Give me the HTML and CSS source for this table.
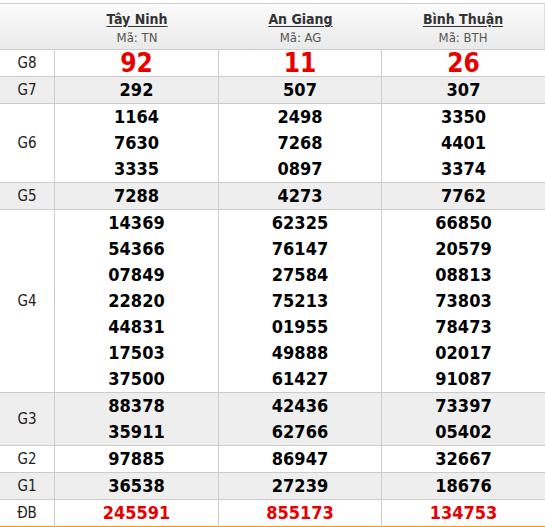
FILE: index.html
```html
<!DOCTYPE html>
<html lang="vi">
<head>
<meta charset="utf-8">
<title>Kết quả xổ số</title>
<link rel="stylesheet" href="styles.css">
</head>
<body>
<table class="kq">
  <colgroup>
    <col class="c-label">
    <col class="c-a">
    <col class="c-b">
    <col class="c-c">
  </colgroup>
  <thead>
    <tr>
      <th class="h-empty"></th>
      <th><a class="prov" href="#">Tây Ninh</a><div class="code">Mã: TN</div></th>
      <th><a class="prov" href="#">An Giang</a><div class="code">Mã: AG</div></th>
      <th class="h-last"><a class="prov" href="#">Bình Thuận</a><div class="code">Mã: BTH</div></th>
    </tr>
  </thead>
  <tbody>
    <tr class="g8">
      <td class="lbl">G8</td>
      <td><div class="n big">92</div></td>
      <td><div class="n big">11</div></td>
      <td><div class="n big">26</div></td>
    </tr>
    <tr class="alt">
      <td class="lbl">G7</td>
      <td><div class="n">292</div></td>
      <td><div class="n">507</div></td>
      <td><div class="n">307</div></td>
    </tr>
    <tr>
      <td class="lbl">G6</td>
      <td><div class="n">1164</div><div class="n">7630</div><div class="n">3335</div></td>
      <td><div class="n">2498</div><div class="n">7268</div><div class="n">0897</div></td>
      <td><div class="n">3350</div><div class="n">4401</div><div class="n">3374</div></td>
    </tr>
    <tr class="alt">
      <td class="lbl">G5</td>
      <td><div class="n">7288</div></td>
      <td><div class="n">4273</div></td>
      <td><div class="n">7762</div></td>
    </tr>
    <tr>
      <td class="lbl">G4</td>
      <td><div class="n">14369</div><div class="n">54366</div><div class="n">07849</div><div class="n">22820</div><div class="n">44831</div><div class="n">17503</div><div class="n">37500</div></td>
      <td><div class="n">62325</div><div class="n">76147</div><div class="n">27584</div><div class="n">75213</div><div class="n">01955</div><div class="n">49888</div><div class="n">61427</div></td>
      <td><div class="n">66850</div><div class="n">20579</div><div class="n">08813</div><div class="n">73803</div><div class="n">78473</div><div class="n">02017</div><div class="n">91087</div></td>
    </tr>
    <tr class="alt">
      <td class="lbl">G3</td>
      <td><div class="n">88378</div><div class="n">35911</div></td>
      <td><div class="n">42436</div><div class="n">62766</div></td>
      <td><div class="n">73397</div><div class="n">05402</div></td>
    </tr>
    <tr>
      <td class="lbl">G2</td>
      <td><div class="n">97885</div></td>
      <td><div class="n">86947</div></td>
      <td><div class="n">32667</div></td>
    </tr>
    <tr class="alt">
      <td class="lbl">G1</td>
      <td><div class="n">36538</div></td>
      <td><div class="n">27239</div></td>
      <td><div class="n">18676</div></td>
    </tr>
    <tr class="db">
      <td class="lbl">ĐB</td>
      <td><div class="n red">245591</div></td>
      <td><div class="n red">855173</div></td>
      <td><div class="n red">134753</div></td>
    </tr>
  </tbody>
</table>
</body>
</html>
```
FILE: styles.css
```css
html, body {
  margin: 0;
  padding: 0;
  background: #fff;
}
body {
  font-family: "DejaVu Sans Condensed", "DejaVu Sans", sans-serif;
  color: #222;
}
.kq {
  width: 545px;
  margin-top: 3px;
  border-collapse: separate;
  border-spacing: 0;
  table-layout: fixed;
  border-top: 1px solid #cfcfcf;
}
.c-label { width: 55px; }
.c-a { width: 164px; }
.c-b { width: 163px; }
.c-c { width: 163px; }

.kq thead th {
  height: 39px;
  padding: 6px 0 0;
  vertical-align: top;
  text-align: center;
  background: linear-gradient(#fbfbfb, #eaeaea);
  border-bottom: 1px solid #cccccc;
  font-weight: normal;
}
.kq thead th.h-last {
  border-right: 1px solid #dedede;
}
.prov {
  display: block;
  font-size: 14px;
  line-height: 18px;
  font-weight: bold;
  color: #333;
  text-decoration: underline;
  text-underline-offset: 2px;
}
.code {
  font-size: 13px;
  line-height: 19px;
  color: #555;
}

.kq td {
  padding: 0;
  text-align: center;
  vertical-align: middle;
  border-bottom: 1px solid #cccccc;
  border-right: 1px solid #cccccc;
}
.kq td:last-child {
  border-right: none;
}
.kq tr.alt td {
  background: #eeeeee;
}
.lbl {
  font-size: 15px;
  color: #222;
}
.n {
  font-size: 18px;
  line-height: 26px;
  font-weight: bold;
  color: #000;
}
.n.big {
  font-size: 26px;
  color: #e60000;
}
.n.red {
  color: #e60000;
  font-size: 18px;
  line-height: 26px;
}
.kq tr.db td {
  border-bottom: 2px solid #f7931e;
}
```
